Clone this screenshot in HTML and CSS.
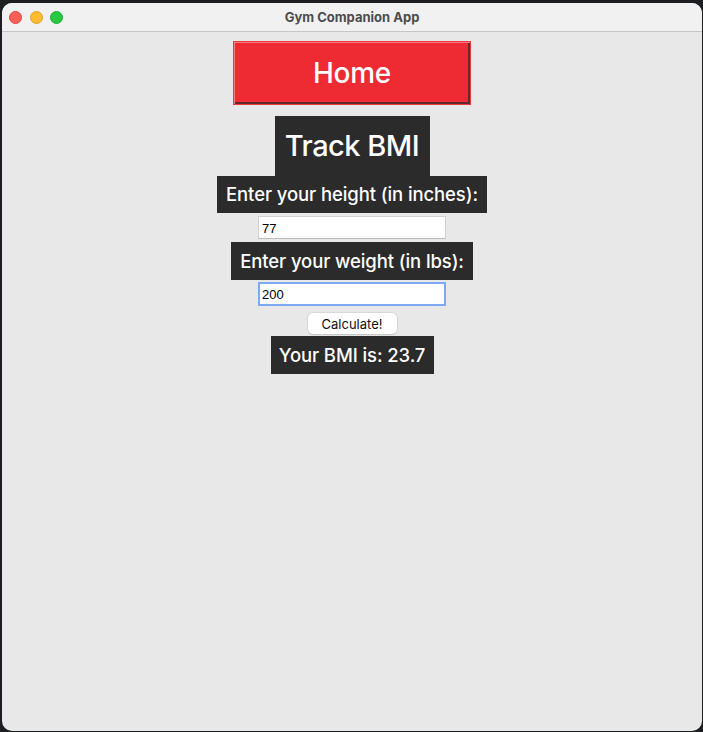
FILE: index.html
```html
<!DOCTYPE html>
<html>
<head>
<meta charset="utf-8">
<title>Gym Companion App</title>
<link rel="stylesheet" href="styles.css">
</head>
<body>
<div class="window">
  <div class="titlebar">
    <div class="lights">
      <span class="light red"></span>
      <span class="light yellow"></span>
      <span class="light green"></span>
    </div>
    <div class="title">Gym Companion App</div>
  </div>
  <div class="content">
    <button class="home">Home</button>
    <div class="label heading">Track BMI</div>
    <div class="label prompt height-label">Enter your height (in inches):</div>
    <input class="entry" type="text" value="77">
    <div class="label prompt weight-label">Enter your weight (in lbs):</div>
    <input class="entry focused" type="text" value="200">
    <button class="calc">Calculate!</button>
    <div class="label prompt result">Your BMI is: 23.7</div>
  </div>
</div>
</body>
</html>
```
FILE: styles.css
```css
html, body {
  margin: 0;
  padding: 0;
  background: #1d1e21;
  width: 703px;
  height: 732px;
  overflow: hidden;
  font-family: Inter, "Liberation Sans", sans-serif;
}

.window {
  margin: 3px 0 0 2px;
  width: 700px;
  height: 728px;
  border-radius: 10px;
  overflow: hidden;
  background: #e8e8e8;
  display: flex;
  flex-direction: column;
}

.titlebar {
  height: 28px;
  background: #f1f1f1;
  border-bottom: 1px solid #c6c6c6;
  display: flex;
  align-items: center;
  position: relative;
}

.lights {
  display: flex;
  gap: 7.5px;
  padding-left: 7px;
}

.light {
  width: 13px;
  height: 13px;
  border-radius: 50%;
  box-sizing: border-box;
}
.light.red { background: #fe5f57; border: 0.5px solid #e14640; }
.light.yellow { background: #febc2e; border: 0.5px solid #dfa023; }
.light.green { background: #28c840; border: 0.5px solid #1aab29; }

.title {
  position: absolute;
  left: 0;
  right: 0;
  top: 0;
  line-height: 28px;
  text-align: center;
  font-size: 13px;
  font-weight: 700;
  color: #4c4c4c;
}

.content {
  display: flex;
  flex-direction: column;
  align-items: center;
  padding-top: 9px;
}

.home {
  width: 238px;
  height: 64px;
  box-sizing: border-box;
  background: #ee2a33;
  border: 1px solid #f0363e;
  box-shadow: inset 1px 1px 0 #f47d82, inset -2px -2px 0 #5e2a2e;
  color: #ffffff;
  font-family: inherit;
  font-size: 28px;
  font-weight: 500;
  letter-spacing: -0.3px;
  padding: 0;
  margin: 0;
}

.label {
  background: #2b2b2b;
  color: #ffffff;
  box-sizing: border-box;
  text-align: center;
  white-space: nowrap;
}

.heading {
  margin-top: 11px;
  width: 155px;
  height: 60px;
  line-height: 60px;
  font-size: 29px;
  font-weight: 500;
  letter-spacing: -0.5px;
}

.prompt {
  font-size: 18.5px;
  font-weight: 500;
  letter-spacing: -0.1px;
  height: 38px;
  line-height: 38px;
}

.height-label {
  width: 270px;
  height: 37px;
  line-height: 37px;
}

.weight-label {
  width: 242px;
  margin-top: 3px;
}

.entry {
  margin: 3px 0 0 0;
  width: 188px;
  height: 23px;
  box-sizing: border-box;
  border: 1px solid #d0d0d0;
  border-bottom-color: #bdbdbd;
  background: #ffffff;
  font-family: "Liberation Sans", Arial, sans-serif;
  font-size: 13px;
  color: #000;
  padding: 1px 3px 0 3px;
  outline: none;
}

.entry.focused {
  margin-top: 2px;
  height: 24px;
  border: 2px solid #7eaaf3;
  padding: 0 2px;
}

.calc {
  margin-top: 7px;
  width: 89px;
  height: 21px;
  box-sizing: border-box;
  background: #ffffff;
  border: none;
  border-radius: 5px;
  box-shadow: 0 0 0 0.5px #c9c9c9, 0 1px 1px rgba(0,0,0,0.18);
  font-family: Inter, "Liberation Sans", sans-serif;
  font-size: 13px;
  color: #111;
  padding: 0;
}

.result {
  margin-top: 2px;
  width: 163px;
}
```
